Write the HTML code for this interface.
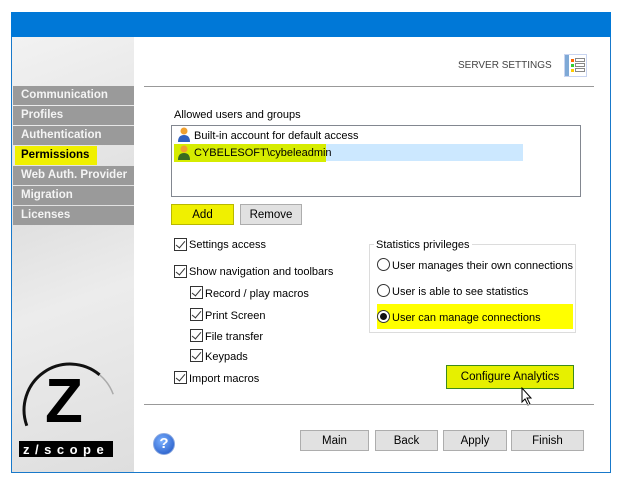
<!DOCTYPE html>
<html><head><style>
*{margin:0;padding:0;box-sizing:border-box}
body{width:620px;height:483px;background:#fff;position:relative;font-family:"Liberation Sans",sans-serif;font-size:11px;color:#000;overflow:hidden}
.a{position:absolute}
.nav{position:absolute;left:13px;width:121px;height:19px;background:#9a9a9a;color:#f4f4f4;font-weight:bold;font-size:11.5px;padding:3px 0 0 8px}
.btn{position:absolute;height:21px;background:#e1e1e1;border:1px solid #adadad;text-align:center;line-height:20px;font-size:11.5px}
.cb{position:absolute;width:13px;height:13px;border:1px solid #333;background:#fff}
.cb::after{content:"";position:absolute;left:3px;top:0px;width:4px;height:8px;border:solid #333;border-width:0 1px 1px 0;transform:rotate(40deg)}
.rb{position:absolute;width:13px;height:13px;border:1px solid #333;border-radius:50%;background:#fff}
.t{position:absolute;white-space:nowrap}
.user{position:absolute;width:12px;height:15px}
</style></head><body>
<div class="a" style="left:11px;top:12px;width:600px;height:461px;border:1px solid #1979ca;border-top:0"></div>
<div class="a" style="left:11px;top:12px;width:600px;height:25px;background:#0078d7"></div>
<div class="a" style="left:12px;top:37px;width:122px;height:435px;background:linear-gradient(160deg,#f2f2f2 0%,#e0e0e0 40%,#ececec 60%,#dedede 100%)"></div>
<div class="nav" style="top:86px">Communication</div>
<div class="nav" style="top:106px">Profiles</div>
<div class="nav" style="top:126px">Authentication</div>
<div class="a" style="left:15px;top:146px;width:82px;height:19px;background:#f0f000;font-weight:bold;font-size:11.5px;padding:3px 0 0 6px;color:#000">Permissions</div>
<div class="nav" style="top:166px">Web Auth. Provider</div>
<div class="nav" style="top:186px">Migration</div>
<div class="nav" style="top:206px">Licenses</div>
<!-- logo -->
<svg class="a" style="left:12px;top:345px" width="122" height="120">
<path d="M14.8 80.7 A46 46 0 0 1 87.6 29.8" fill="none" stroke="#111" stroke-width="3"/>
<path d="M87.6 29.8 A46 46 0 0 1 101.2 49.3" fill="none" stroke="#aaa" stroke-width="1.5"/>
<text x="33" y="77" font-family="Liberation Sans" font-weight="bold" font-size="62" fill="#000">Z</text>
<rect x="7" y="96" width="94" height="16" fill="#000"/>
<text x="11" y="109" font-family="Liberation Sans" font-weight="bold" font-size="13" fill="#fff" letter-spacing="5.5">z/scope</text>
</svg>
<div class="t" style="left:458px;top:60px;color:#444;font-size:10px">SERVER SETTINGS</div>
<div class="a" style="left:564px;top:54px;width:23px;height:23px;border:1px solid #c8d4f0;background:#fff"></div>
<div class="a" style="left:565px;top:55px;width:4px;height:21px;background:#7fa9d6"></div>
<div class="a" style="left:571px;top:59px;width:3px;height:3px;background:#f60"></div>
<div class="a" style="left:571px;top:64px;width:3px;height:3px;background:#3c3"></div>
<div class="a" style="left:571px;top:69px;width:3px;height:3px;background:#fc0"></div>
<div class="a" style="left:575px;top:58px;width:10px;height:4px;border:1px solid #888"></div>
<div class="a" style="left:575px;top:63px;width:10px;height:4px;border:1px solid #888"></div>
<div class="a" style="left:575px;top:68px;width:10px;height:4px;border:1px solid #888"></div>
<div class="a" style="left:144px;top:86px;width:450px;height:1px;background:#999"></div>
<div class="t" style="left:174px;top:109px">Allowed users and groups</div>
<div class="a" style="left:171px;top:125px;width:410px;height:72px;border:1px solid #828790;background:#fff"></div>
<div class="a" style="left:174px;top:144px;width:349px;height:17px;background:#cce8ff"></div>
<div class="a" style="left:174px;top:144px;width:152px;height:18px;background:#d6ec00"></div>
<svg class="user" style="left:178px;top:127px" viewBox="0 0 12 15"><circle cx="6" cy="4" r="3.5" fill="#f0a030"/><path d="M0 15 Q0 8 6 8 Q12 8 12 15Z" fill="#3060c0"/></svg>
<svg class="user" style="left:178px;top:145px" viewBox="0 0 12 15"><circle cx="6" cy="4" r="3.5" fill="#f0a030"/><path d="M0 15 Q0 8 6 8 Q12 8 12 15Z" fill="#3a6a20"/></svg>
<div class="t" style="left:194px;top:130px">Built-in account for default access</div>
<div class="t" style="left:194px;top:147px">CYBELESOFT\cybeleadmin</div>
<div class="btn" style="left:171px;top:204px;width:63px;background:#f0f000;border-color:#b8b800">Add</div>
<div class="btn" style="left:240px;top:204px;width:62px">Remove</div>
<div class="cb" style="left:174px;top:238px"></div><div class="t" style="left:189px;top:239px">Settings access</div>
<div class="cb" style="left:174px;top:265px"></div><div class="t" style="left:189px;top:266px">Show navigation and toolbars</div>
<div class="cb" style="left:190px;top:286px"></div><div class="t" style="left:205px;top:288px">Record / play macros</div>
<div class="cb" style="left:190px;top:308px"></div><div class="t" style="left:205px;top:310px">Print Screen</div>
<div class="cb" style="left:190px;top:329px"></div><div class="t" style="left:205px;top:331px">File transfer</div>
<div class="cb" style="left:190px;top:349px"></div><div class="t" style="left:205px;top:351px">Keypads</div>
<div class="cb" style="left:174px;top:371px"></div><div class="t" style="left:189px;top:373px">Import macros</div>
<div class="a" style="left:369px;top:244px;width:207px;height:89px;border:1px solid #dcdcdc"></div>
<div class="t" style="left:374px;top:239px;background:#fff;padding:0 2px">Statistics privileges</div>
<div class="a" style="left:377px;top:304px;width:196px;height:25px;background:#ffff00"></div>
<div class="rb" style="left:377px;top:258px"></div><div class="t" style="left:392px;top:260px">User manages their own connections</div>
<div class="rb" style="left:377px;top:284px"></div><div class="t" style="left:392px;top:286px">User is able to see statistics</div>
<div class="rb" style="left:377px;top:310px"></div><div class="a" style="left:380px;top:313px;width:7px;height:7px;border-radius:50%;background:#111"></div>
<div class="t" style="left:392px;top:312px">User can manage connections</div>
<div class="btn" style="left:446px;top:365px;width:128px;height:24px;line-height:23px;background:#e6f000;border-color:#3c8a1c">Configure Analytics</div>
<svg class="a" style="left:521px;top:387px" width="12" height="19"><path d="M1 1 L1 15 L4 12 L7 18 L9 17 L6 11 L10 11 Z" fill="#fff" stroke="#000" stroke-width="1"/></svg>
<div class="a" style="left:144px;top:404px;width:450px;height:1px;background:#999"></div>
<div class="a" style="left:153px;top:433px;width:22px;height:22px;border-radius:50%;background:radial-gradient(circle at 40% 35%,#7ab0ff,#1a50c0);border:1px solid #8aa8e0;color:#fff;font-weight:bold;font-size:15px;text-align:center;line-height:20px">?</div>
<div class="btn" style="left:300px;top:430px;width:69px">Main</div>
<div class="btn" style="left:375px;top:430px;width:63px">Back</div>
<div class="btn" style="left:443px;top:430px;width:64px">Apply</div>
<div class="btn" style="left:511px;top:430px;width:73px">Finish</div>
</body></html>
